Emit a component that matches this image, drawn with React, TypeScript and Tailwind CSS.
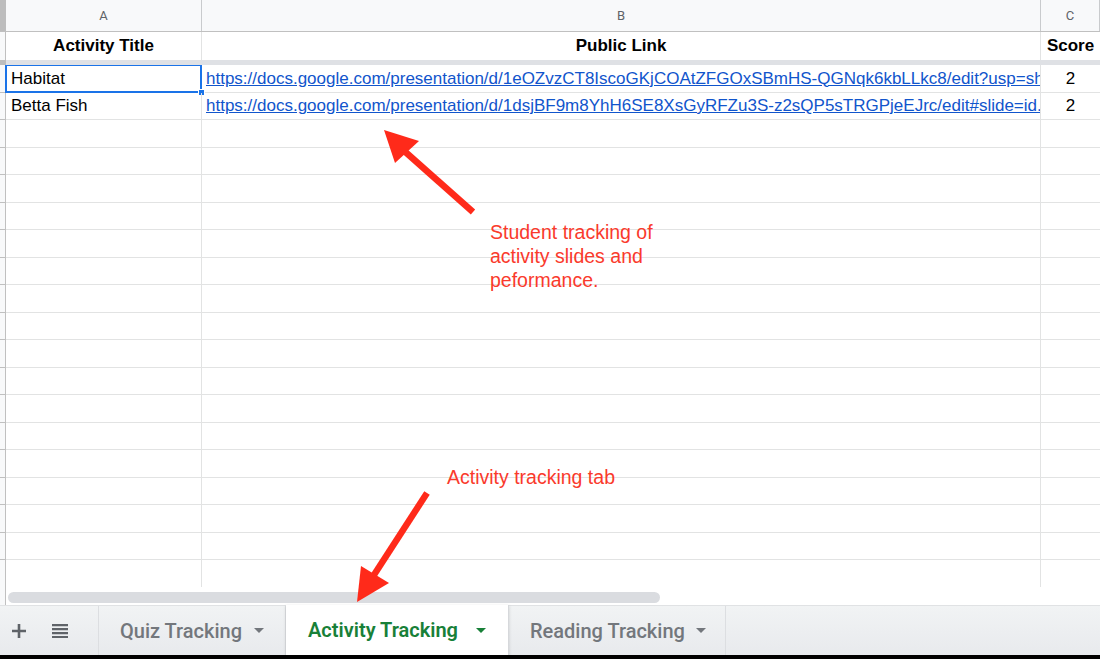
import React from "react";

const ROWS = [
  {
    a: "Habitat",
    b: "https://docs.google.com/presentation/d/1eOZvzCT8IscoGKjCOAtZFGOxSBmHS-QGNqk6kbLLkc8/edit?usp=sharing",
    c: "2",
    selected: true,
  },
  {
    a: "Betta Fish",
    b: "https://docs.google.com/presentation/d/1dsjBF9m8YhH6SE8XsGyRFZu3S-z2sQP5sTRGPjeEJrc/edit#slide=id.p",
    c: "2",
  },
];

const EMPTY = 17;

function Caret({ color }: { color: string }) {
  return (
    <svg width="10" height="5" viewBox="0 0 10 5">
      <path d="M0 0 L10 0 L5 5 Z" fill={color} />
    </svg>
  );
}

function DataRow({ a, b, c, selected }: { a?: string; b?: string; c?: string; selected?: boolean }) {
  return (
    <div className="flex h-[27.5px] shrink-0">
      <div className="w-[6px] bg-[#f8f9fa] border-r border-b border-[#c0c0c0]" />
      <div className="relative w-[196px] border-r border-b border-[#e2e3e3] flex items-center pl-[5px] text-[17px] text-black whitespace-nowrap">
        {a}
        {selected && (
          <>
            <div className="absolute -left-px -top-px -right-px -bottom-px border-2 border-[#1a73e8]" />
            <div className="absolute -right-[4px] -bottom-[4px] w-[7px] h-[7px] bg-[#1a73e8] border border-white" />
          </>
        )}
      </div>
      <div className="w-[839px] border-r border-b border-[#e2e3e3] flex items-center pl-[4px] overflow-hidden whitespace-nowrap text-[17px] text-[#1155cc] underline">
        {b}
      </div>
      <div className="flex-1 border-b border-[#e2e3e3] flex items-center justify-center text-[17px] text-black">
        {c}
      </div>
    </div>
  );
}

export default function App() {
  return (
    <div className="relative w-[1100px] h-[659px] overflow-hidden flex flex-col bg-white font-['Liberation_Sans',Arial,sans-serif]">
      {/* column letters */}
      <div className="flex h-[32px] shrink-0 bg-[#f8f9fa] border-b border-[#c0c0c0]">
        <div className="w-[6px] bg-[#bdbdbd]" />
        <div className="w-[196px] border-r border-[#c9cbcd] flex items-center justify-center text-[13px] text-[#5f6368] font-['Roboto',Arial,sans-serif]">A</div>
        <div className="w-[839px] border-r border-[#c9cbcd] flex items-center justify-center text-[13px] text-[#5f6368] font-['Roboto',Arial,sans-serif]">B</div>
        <div className="flex-1 border-r border-[#c9cbcd] flex items-center justify-center text-[13px] text-[#5f6368] font-['Roboto',Arial,sans-serif]">C</div>
      </div>

      {/* frozen header row */}
      <div className="flex h-[28px] shrink-0">
        <div className="w-[6px] bg-[#f8f9fa] border-r border-[#c0c0c0]" />
        <div className="w-[196px] border-r border-[#e2e3e3] flex items-center justify-center text-[17px] font-bold text-black">Activity Title</div>
        <div className="w-[839px] border-r border-[#e2e3e3] flex items-center justify-center text-[17px] font-bold text-black">Public Link</div>
        <div className="flex-1 flex items-center justify-center text-[17px] font-bold text-black">Score</div>
      </div>
      <div className="flex h-[5px] shrink-0 bg-[#dfe1e5]">
        <div className="w-[6px] bg-[#bdbdbd]" />
      </div>

      {/* rows */}
      <div className="flex flex-col h-[522px] shrink-0 overflow-hidden">
        {ROWS.map((r, i) => (
          <DataRow key={i} {...r} />
        ))}
        {Array.from({ length: EMPTY }).map((_, i) => (
          <DataRow key={"e" + i} />
        ))}
      </div>

      {/* horizontal scrollbar */}
      <div className="flex h-[18px] shrink-0">
        <div className="w-[6px] bg-[#f8f9fa] border-r border-[#c0c0c0]" />
        <div className="flex-1 pt-[5px] pl-[2px]">
          <div className="w-[652px] h-[11px] rounded-full bg-[#dadce0]" />
        </div>
      </div>

      {/* sheet tabs */}
      <div className="flex h-[50px] shrink-0 bg-gradient-to-b from-[#f1f3f4] to-[#e8eaed] border-t border-[#e0e2e4] font-['Roboto',Arial,sans-serif]">
        <div className="w-[99px] flex items-center border-r border-[#dcdee1]">
          <svg className="ml-[12px]" width="14" height="14" viewBox="0 0 14 14">
            <path d="M7 0 V14 M0 7 H14" stroke="#5f6368" strokeWidth="2.6" />
          </svg>
          <svg className="ml-[26px]" width="16" height="14" viewBox="0 0 16 14">
            <path d="M0 1.2 H16 M0 5.2 H16 M0 9.2 H16 M0 13 H16" stroke="#5f6368" strokeWidth="2.2" />
          </svg>
        </div>
        <div className="w-[187px] flex items-center pl-[21px] border-r border-[#dcdee1]">
          <span className="text-[20px] font-medium text-[#73777c]">Quiz Tracking</span>
          <span className="ml-[12px]"><Caret color="#73777c" /></span>
        </div>
        <div className="w-[223px] -mt-px flex items-center pl-[22px] bg-white border-r border-[#d6d8db] shadow-[0_1px_3px_rgba(60,64,67,0.2)]">
          <span className="text-[20px] font-semibold text-[#188038]">Activity Tracking</span>
          <span className="ml-[18px]"><Caret color="#188038" /></span>
        </div>
        <div className="w-[217px] flex items-center pl-[21px] border-r border-[#dcdee1]">
          <span className="text-[20px] font-medium text-[#73777c]">Reading Tracking</span>
          <span className="ml-[11px]"><Caret color="#73777c" /></span>
        </div>
        <div className="flex-1" />
      </div>
      <div className="h-[4px] shrink-0 bg-black" />

      {/* annotations */}
      <div className="absolute left-[490px] top-[220px] text-[19.5px] leading-[24px] text-[#fa3a2c] font-['Liberation_Sans',Arial,sans-serif]">
        Student tracking of
        <br />
        activity slides and
        <br />
        peformance.
      </div>
      <div className="absolute left-[447px] top-[465px] text-[19.5px] leading-[24px] text-[#fa3a2c] font-['Liberation_Sans',Arial,sans-serif]">
        Activity tracking tab
      </div>
      <svg className="absolute inset-0 pointer-events-none" width="1100" height="659">
        <line x1="473" y1="212" x2="402" y2="149" stroke="#ff2a1a" strokeWidth="6.5" />
        <polygon points="384,130 395,163 419,141" fill="#ff2a1a" />
        <line x1="427" y1="493" x2="372" y2="578" stroke="#ff2a1a" strokeWidth="6.5" />
        <polygon points="357,602 361,566 389,583" fill="#ff2a1a" />
      </svg>
    </div>
  );
}
